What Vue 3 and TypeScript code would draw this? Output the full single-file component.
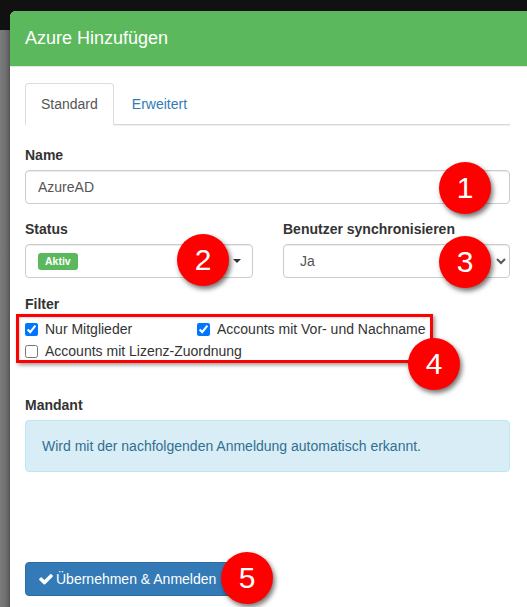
<script setup lang="ts">
const tabs = ['Standard', 'Erweitert']
</script>

<template>
  <div class="page">
    <div class="modal">
      <header class="head">Azure Hinzufügen</header>
      <div class="body">
        <ul class="tabs">
          <li v-for="(t, i) in tabs" :key="t" class="tab" :class="{ active: i === 0 }">{{ t }}</li>
        </ul>

        <div class="group">
          <label class="lbl">Name</label>
          <div class="anchor">
            <input class="ctl" type="text" value="AzureAD" />
            <span class="num n1">1</span>
          </div>
        </div>

        <div class="cols">
          <div class="col-a">
            <label class="lbl">Status</label>
            <div class="anchor">
              <div class="ctl picker">
                <span class="badge">Aktiv</span>
                <span class="caret"></span>
              </div>
              <span class="num n2">2</span>
            </div>
          </div>
          <div class="col-b">
            <label class="lbl">Benutzer synchronisieren</label>
            <div class="anchor">
              <select class="ctl">
                <option>Ja</option>
              </select>
              <span class="num n3">3</span>
            </div>
          </div>
        </div>

        <div class="filter">
          <label class="lbl">Filter</label>
          <div class="anchor">
            <div class="checks">
              <label class="chk wide"><input type="checkbox" checked />Nur Mitglieder</label>
              <label class="chk"><input type="checkbox" checked />Accounts mit Vor- und Nachname</label>
              <label class="chk full"><input type="checkbox" />Accounts mit Lizenz-Zuordnung</label>
            </div>
            <span class="num n4">4</span>
          </div>
        </div>

        <div class="mandant">
          <label class="lbl">Mandant</label>
          <div class="alert">Wird mit der nachfolgenden Anmeldung automatisch erkannt.</div>
        </div>

        <div class="anchor btn-wrap">
          <button class="btn" type="button">
            <svg class="tick" viewBox="0 0 1792 1792" width="16" height="16" aria-hidden="true">
              <path fill="#fff" d="M1671 566q0 40-28 68l-724 724-136 136q-28 28-68 28t-68-28l-136-136-362-362q-28-28-28-68t28-68l136-136q28-28 68-28t68 28l294 295 656-657q28-28 68-28t68 28l136 136q28 28 28 68z" />
            </svg>
            Übernehmen &amp; Anmelden
          </button>
          <span class="num n5">5</span>
        </div>
      </div>
    </div>
  </div>
</template>

<style>
html, body { margin: 0; height: 100%; overflow: hidden; }
</style>

<style scoped>
.page {
  box-sizing: border-box;
  width: 527px;
  height: 607px;
  overflow: hidden;
  padding: 11px 0 0 10px;
  background:
    linear-gradient(#111 0, #111 30px, transparent 30px),
    linear-gradient(90deg, #7c7c7c 0, #6e6e6e 6px, #555 10px);
  font-family: "Liberation Sans", Arial, sans-serif;
  font-size: 14px;
  line-height: 20px;
  color: #333;
}
.modal {
  height: 640px;
  background: #fff;
  border-radius: 6px 0 0 0;
  overflow: hidden;
}
.head {
  box-sizing: border-box;
  height: 56px;
  padding: 15px 15px;
  background: #5cb85c;
  border-bottom: 1px solid #e5e5e5;
  color: #fff;
  font-size: 18px;
  line-height: 25px;
}
.body { padding: 16px 17px 0 15px; }
.tabs {
  display: flex;
  list-style: none;
  margin: 0 0 20px;
  padding: 0;
  height: 41px;
  border-bottom: 1px solid #d8d8d8;
  box-shadow: 0 1px 0 #f0f0f0;
}
.tab {
  margin-right: 2px;
  padding: 10px 15px;
  color: #337ab7;
  height: 20px;
  border: 1px solid transparent;
  border-bottom: 0;
}
.tab.active {
  color: #555;
  background: #fff;
  border: 1px solid #ddd;
  border-bottom: 2px solid #fff;
  border-radius: 4px 4px 0 0;
}
.lbl { display: block; font-weight: 700; margin-bottom: 5px; }
.anchor { position: relative; }
.group { margin-bottom: 15px; }
.ctl {
  display: block;
  box-sizing: border-box;
  width: 100%;
  height: 34px;
  padding: 6px 12px;
  font: inherit;
  color: #555;
  background: #fff;
  border: 1px solid #ccc;
  border-radius: 4px;
  box-shadow: inset 0 1px 1px rgba(0, 0, 0, .075);
}
.cols { display: flex; gap: 30px; margin-bottom: 16px; }
.col-a { width: 228px; }
.col-b { width: 227px; }
.picker { display: flex; align-items: center; justify-content: space-between; }
.badge {
  background: #5cb85c;
  color: #fff;
  font-size: 10.5px;
  font-weight: 700;
  line-height: 11px;
  padding: 3px 7px;
  border-radius: 3px;
}
.caret {
  width: 0;
  height: 0;
  margin-right: -1px;
  border-top: 4px solid #333;
  border-left: 4px solid transparent;
  border-right: 4px solid transparent;
}
.filter { margin-bottom: 32px; }
.filter .lbl { margin-bottom: 0; }
.checks {
  box-sizing: border-box;
  display: flex;
  flex-wrap: wrap;
  align-items: flex-start;
  width: 417px;
  height: 49px;
  margin: 0 0 0 -9px;
  padding: 1px 0 0 6px;
  border: 3px solid #f00;
  box-shadow: 2px 2px 4px rgba(0, 0, 0, .4), inset 1px 1px 2px rgba(0, 0, 0, .15);
}
.chk { display: flex; align-items: center; height: 22px; white-space: nowrap; }
.chk input { width: 13px; height: 13px; margin: 0 7px 0 0; }
.chk.wide { width: 172px; }
.chk.full { width: 100%; }
.alert {
  box-sizing: border-box;
  height: 52px;
  padding: 15px 16px;
  background: #d9edf7;
  border: 1px solid #bce8f1;
  border-radius: 4px;
  color: #31708f;
}
.btn-wrap { margin-top: 90px; width: max-content; }
.btn {
  display: flex;
  align-items: center;
  gap: 2px;
  box-sizing: border-box;
  height: 34px;
  padding: 6px 19px 6px 12px;
  font: inherit;
  color: #fff;
  background: #337ab7;
  border: 1px solid #2e6da4;
  border-radius: 4px;
}
.tick { flex: none; }
.num {
  position: absolute;
  box-sizing: border-box;
  width: 52px;
  height: 52px;
  border-radius: 50%;
  background: #f00;
  color: #fff;
  font-size: 30px;
  font-weight: 400;
  line-height: 52px;
  text-align: center;
  box-shadow: 2px 3px 5px rgba(0, 0, 0, .55);
}
.n1 { left: 414px; top: -8px; }
.n2 { left: 152px; top: -10px; }
.n3 { left: 156px; top: -8px; }
.n4 { left: 383px; top: 24px; }
.n5 { left: 196px; top: -10px; }
</style>
